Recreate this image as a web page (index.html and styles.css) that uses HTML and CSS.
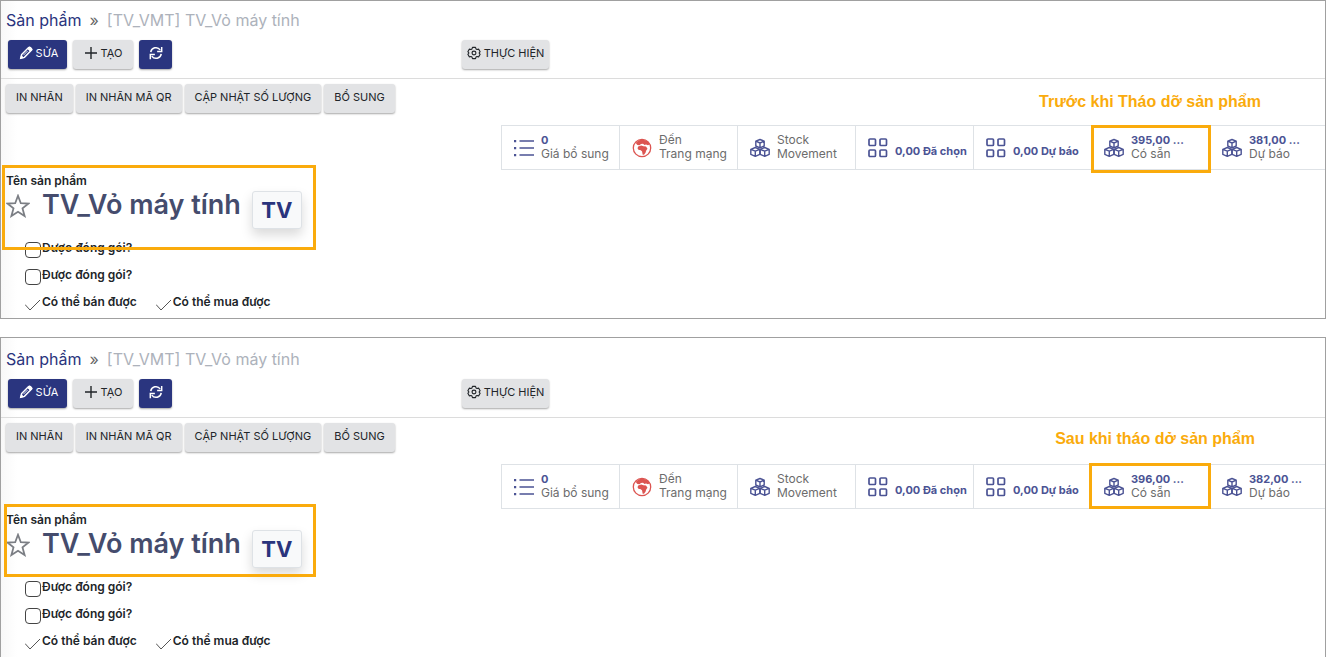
FILE: index.html
```html
<!DOCTYPE html>
<html lang="vi">
<head>
<meta charset="utf-8">
<title>Sản phẩm</title>
<link rel="stylesheet" href="styles.css">
</head>
<body>
<svg class="sprite" aria-hidden="true">
  <symbol id="pencil" viewBox="0 0 16 16"><path d="M2 14l1-4.2L11 1.8q1-.8 2 .1l1 1q1 1 .1 2L6.2 13z" fill="none" stroke="currentColor" stroke-width="1.7"/><path d="M9.8 3l3.2 3.2 1.8-2L12 1.300zM2 14l.7-3 2.400 2.300zM5 10.500l5-5" fill="currentColor" stroke="currentColor"/></symbol>
  <symbol id="plus" viewBox="0 0 14 14"><path d="M7 1v12M1 7h12" stroke="currentColor" stroke-width="1.4"/></symbol>
  <symbol id="refresh" viewBox="0 0 16 16"><path d="M2 7a6 6 0 0 1 10.800-2.600M14 9a6 6 0 0 1-10.800 2.600M14.500 1V6.200H9.300M1.500 15V9.800h5.200" fill="none" stroke="currentColor" stroke-width="1.7"/></symbol>
  <symbol id="gear" viewBox="0 0 16 16"><path d="M6.300 1.500h3.400l.6 1.800 1.200.7 1.900-.4 1.600 2.900L13.800 8l1.200 1.500-1.600 2.900-1.900-.4-1.200.7-.6 1.800H6.300l-.6-1.800-1.200-.7-1.900.4L1 9.500 2.200 8 1 6.500l1.600-2.900 1.900.4 1.200-.7z" fill="none" stroke="currentColor" stroke-width="1.300" stroke-linejoin="round"/><circle cx="8" cy="8" r="2.200" fill="none" stroke="currentColor" stroke-width="1.300"/></symbol>
  <symbol id="star" viewBox="0 0 24 24"><path d="M12 1.800l2.800 7.400 7.800.3-6.100 4.900 2.100 7.600L12 17.700 5.400 22l2.100-7.600L1.400 9.500l7.800-.3z" fill="none" stroke="currentColor" stroke-width="1.800"/></symbol>
  <symbol id="list" viewBox="0 0 20 20"><path d="M5.500 3H20M5.500 10H20M5.500 17H20" stroke="currentColor" stroke-width="1.500"/><path d="M0 2h2.200v2.200H0zM0 9h2.200v2.200H0zM0 16h2.200v2.200H0z" fill="currentColor"/></symbol>
  <symbol id="globe" viewBox="0 0 20 20"><circle cx="10" cy="10" r="8.700" fill="none" stroke="currentColor" stroke-width="1.300"/><path d="M4 4.500L7 2.300l4-.8 4.500 1.700 2.300 3-1.800 1-2-.7-1.500.5-1.500-1.300-2 .3-1.500 1.300-2-.2-1.300-1.300zM6.200 8.500l3-1 2.300.7 2.500.2 1.500 2.300-1.300 1.800-.7 2.200-1.500 2h-1.300l-.7-3.500-1.700-1.200H6.700l-1.200-1.700z" fill="currentColor"/></symbol>
  <symbol id="cubes" viewBox="0 0 20 20"><g fill="none" stroke="currentColor" stroke-width="1.400" stroke-linejoin="round"><path d="M10 1.500l4.200 1.700v4.800L10 9.800 5.800 8V3.200zM5.800 3.200L10 5l4.200-1.800M10 5v4.800"/><path d="M5.300 9.500L9.800 11.300v5L5.300 18.300.8 16.300v-5zM.8 11.300l4.500 1.900 4.500-1.900M5.300 13.200v5.100"/><path d="M14.700 9.500l4.500 1.800v5l-4.500 2-4.500-2v-5zM10.200 11.300l4.500 1.900 4.500-1.900M14.700 13.200v5.100"/></g></symbol>
  <symbol id="grid" viewBox="0 0 20 20"><g fill="none" stroke="currentColor" stroke-width="1.700"><rect x="1" y="1" width="6.500" height="6.500" rx="1"/><rect x="12" y="1" width="6.500" height="6.500" rx="1"/><rect x="1" y="12" width="6.500" height="6.500" rx="1"/><rect x="12" y="12" width="6.500" height="6.500" rx="1"/></g></symbol>
</svg>

<section class="panel before">
  <nav class="crumbs"><a href="#">Sản phẩm</a><span class="sep">»</span><span class="current">[TV_VMT] TV_Vỏ máy tính</span></nav>
  <div class="toolbar">
    <div class="actions">
      <button class="btn primary edit"><svg class="ico"><use href="#pencil"/></svg>SỬA</button>
      <button class="btn create"><svg class="ico"><use href="#plus"/></svg>TẠO</button>
      <button class="btn primary reload" aria-label="Tải lại"><svg class="ico"><use href="#refresh"/></svg></button>
    </div>
    <button class="btn run"><svg class="ico"><use href="#gear"/></svg>THỰC HIỆN</button>
  </div>
  <div class="subbar">
    <button class="btn">IN NHÃN</button>
    <button class="btn">IN NHÃN MÃ QR</button>
    <button class="btn">CẬP NHẬT SỐ LƯỢNG</button>
    <button class="btn">BỔ SUNG</button>
  </div>
  <div class="stats">
    <button class="stat"><svg class="glyph"><use href="#list"/></svg><span class="info"><b>0</b><span>Giá bổ sung</span></span></button>
    <button class="stat"><svg class="glyph red"><use href="#globe"/></svg><span class="info"><span>Đến</span><span>Trang mạng</span></span></button>
    <button class="stat"><svg class="glyph"><use href="#cubes"/></svg><span class="info"><span>Stock</span><span>Movement</span></span></button>
    <button class="stat"><svg class="glyph"><use href="#grid"/></svg><span class="info single"><b>0,00 Đã chọn</b></span></button>
    <button class="stat"><svg class="glyph"><use href="#grid"/></svg><span class="info single"><b>0,00 Dự báo</b></span></button>
    <button class="stat"><svg class="glyph"><use href="#cubes"/></svg><span class="info"><b>395,00 ...</b><span>Có sẵn</span></span></button>
    <button class="stat"><svg class="glyph"><use href="#cubes"/></svg><span class="info"><b>381,00 ...</b><span>Dự báo</span></span></button>
  </div>
  <div class="product">
    <div class="caption">Tên sản phẩm</div>
    <div class="name">
      <button class="fav" aria-label="Yêu thích"><svg><use href="#star"/></svg></button>
      <h1>TV_Vỏ máy tính</h1>
      <button class="lang">TV</button>
    </div>
    <div class="options">
      <div class="line"><label><input type="checkbox">Được đóng gói?</label></div>
      <div class="line"><label><input type="checkbox">Được đóng gói?</label></div>
      <div class="line"><label><input type="checkbox" class="tick" checked>Có thể bán được</label><label><input type="checkbox" class="tick" checked>Có thể mua được</label></div>
    </div>
  </div>
  <div class="note">Trước khi Tháo dỡ sản phẩm</div>
  <div class="mark mark-stock"></div>
  <div class="mark mark-name"></div>
</section>

<section class="panel after">
  <nav class="crumbs"><a href="#">Sản phẩm</a><span class="sep">»</span><span class="current">[TV_VMT] TV_Vỏ máy tính</span></nav>
  <div class="toolbar">
    <div class="actions">
      <button class="btn primary edit"><svg class="ico"><use href="#pencil"/></svg>SỬA</button>
      <button class="btn create"><svg class="ico"><use href="#plus"/></svg>TẠO</button>
      <button class="btn primary reload" aria-label="Tải lại"><svg class="ico"><use href="#refresh"/></svg></button>
    </div>
    <button class="btn run"><svg class="ico"><use href="#gear"/></svg>THỰC HIỆN</button>
  </div>
  <div class="subbar">
    <button class="btn">IN NHÃN</button>
    <button class="btn">IN NHÃN MÃ QR</button>
    <button class="btn">CẬP NHẬT SỐ LƯỢNG</button>
    <button class="btn">BỔ SUNG</button>
  </div>
  <div class="stats">
    <button class="stat"><svg class="glyph"><use href="#list"/></svg><span class="info"><b>0</b><span>Giá bổ sung</span></span></button>
    <button class="stat"><svg class="glyph red"><use href="#globe"/></svg><span class="info"><span>Đến</span><span>Trang mạng</span></span></button>
    <button class="stat"><svg class="glyph"><use href="#cubes"/></svg><span class="info"><span>Stock</span><span>Movement</span></span></button>
    <button class="stat"><svg class="glyph"><use href="#grid"/></svg><span class="info single"><b>0,00 Đã chọn</b></span></button>
    <button class="stat"><svg class="glyph"><use href="#grid"/></svg><span class="info single"><b>0,00 Dự báo</b></span></button>
    <button class="stat"><svg class="glyph"><use href="#cubes"/></svg><span class="info"><b>396,00 ...</b><span>Có sẵn</span></span></button>
    <button class="stat"><svg class="glyph"><use href="#cubes"/></svg><span class="info"><b>382,00 ...</b><span>Dự báo</span></span></button>
  </div>
  <div class="product">
    <div class="caption">Tên sản phẩm</div>
    <div class="name">
      <button class="fav" aria-label="Yêu thích"><svg><use href="#star"/></svg></button>
      <h1>TV_Vỏ máy tính</h1>
      <button class="lang">TV</button>
    </div>
    <div class="options">
      <div class="line"><label><input type="checkbox">Được đóng gói?</label></div>
      <div class="line"><label><input type="checkbox">Được đóng gói?</label></div>
      <div class="line"><label><input type="checkbox" class="tick" checked>Có thể bán được</label><label><input type="checkbox" class="tick" checked>Có thể mua được</label></div>
    </div>
  </div>
  <div class="note">Sau khi tháo dở sản phẩm</div>
  <div class="mark mark-stock"></div>
  <div class="mark mark-name"></div>
</section>
</body>
</html>
```

FILE: styles.css
```css
* { box-sizing: border-box; }

body {
  margin: 0;
  display: flex;
  flex-direction: column;
  gap: 18px;
  background: #fff;
  color: #212529;
  font-family: Inter, "Noto Sans", sans-serif;
}

button { font-family: inherit; margin: 0; cursor: pointer; }

.sprite { display: none; }

.panel {
  position: relative;
  border: 1px solid #a0a0a0;
  padding-bottom: 2px;
  background: linear-gradient(to right, #f8f8f8, #fff 16px);
  overflow: hidden;
}
.before { padding-top: 7px; }
.after { padding-top: 9px; }

.crumbs {
  display: flex;
  align-items: center;
  padding-left: 5px;
  height: 24px;
  font-size: 16px;
}
.crumbs a { color: #2a347d; text-decoration: none; }
.sep { margin: 0 8px; color: #666; }
.current { color: #adb2bb; }

.toolbar {
  display: grid;
  grid-template-columns: 454px 1fr;
  padding: 8px 6px 9px;
  padding-left: 7px;
  border-bottom: 1px solid #dcdcdc;
}
.actions { display: flex; gap: 6px; }

.btn {
  display: inline-flex;
  align-items: center;
  justify-content: center;
  gap: 3px;
  height: 29px;
  padding: 0 10px 3px;
  border: 0;
  border-radius: 3px;
  background: #e2e3e5;
  color: #212529;
  font-size: 11px;
  white-space: nowrap;
  box-shadow: 0 1px 2px rgba(0, 0, 0, .35);
}
.primary { background: #2a357f; color: #fff; }
.edit { width: 59px; padding-left: 8px; padding-right: 6px; }
.create { width: 60px; }
.reload { width: 33px; }
.run { justify-self: start; width: 87px; padding: 0 4px 3px; }
.ico { width: 14px; height: 14px; flex: none; }

.subbar { display: flex; gap: 3px; padding: 5px 4px 0 5px; }

.stats { display: flex; justify-content: flex-end; margin: 12px -2px 0 0; }
.stat {
  display: flex;
  align-items: center;
  gap: 7px;
  flex: 0 0 118px;
  height: 45px;
  padding: 0 5px 0 12px;
  border: 1px solid #dee2e6;
  border-right: 0;
  background: transparent;
  color: #4b5394;
  text-align: left;
}
.glyph { width: 20px; height: 20px; flex: none; }
.red { color: #dc5551; }
.info {
  display: flex;
  flex-direction: column;
  min-width: 0;
  padding-bottom: 2px;
  overflow: hidden;
  color: #6c6c6c;
  font-size: 12px;
  line-height: 14px;
  white-space: nowrap;
}
.info b { color: #4b5394; font-size: 11px; }
.single { padding: 6px 0 0; }

.product { padding: 3px 5px 0; }
.caption { font-size: 12px; font-weight: 600; line-height: 16px; }
.name { display: flex; align-items: flex-start; height: 46px; }
.fav {
  width: 24px;
  height: 34px;
  padding: 5px 0;
  border: 0;
  background: none;
  color: #7b7e84;
}
.fav svg { display: block; width: 24px; height: 24px; }
.name h1 {
  margin: 0 11px 0 12px;
  color: #454c6d;
  font-size: 27px;
  font-weight: 600;
  line-height: 32px;
}
.lang {
  width: 50px;
  height: 38px;
  margin-top: 2px;
  padding: 0;
  border: 1px solid #dee2e6;
  border-radius: 3px;
  background: #f8f9fa;
  color: #2a347d;
  font-size: 22px;
  font-weight: 700;
  box-shadow: 0 6px 12px rgba(0, 0, 0, .15);
}

.options { padding-left: 19px; }
.line { display: flex; gap: 19px; height: 27px; }
.line label {
  display: flex;
  align-items: flex-start;
  gap: 1px;
  font-size: 12px;
  font-weight: 600;
  line-height: 25px;
}
.line input {
  appearance: none;
  width: 16px;
  height: 16px;
  margin: 7px 0 0;
  border: 1px solid #444;
  border-radius: 4px;
  background: #fff;
}
.line .tick {
  border: 0;
  background: url("data:image/svg+xml,%3Csvg xmlns='http://www.w3.org/2000/svg' viewBox='0 0 16 16'%3E%3Cpath d='M0 8.500L5 14 15 4' fill='none' stroke='%23555'/%3E%3C/svg%3E");
}

.note {
  position: absolute;
  color: #faab0c;
  font: bold 16px/20px "Liberation Sans", Arial, sans-serif;
}
.before .note { top: 91px; right: 64px; }
.after .note { top: 91px; right: 70px; }

.mark { position: absolute; border: 3px solid #faab0c; pointer-events: none; }
.before .mark-stock { top: 124px; right: 114px; width: 120px; height: 48px; }
.before .mark-name { top: 164px; left: 1px; width: 314px; height: 85px; }
.after .mark-stock { top: 125px; right: 114px; width: 122px; height: 46px; }
.after .mark-name { top: 166px; left: 3px; width: 312px; height: 73px; }
```
